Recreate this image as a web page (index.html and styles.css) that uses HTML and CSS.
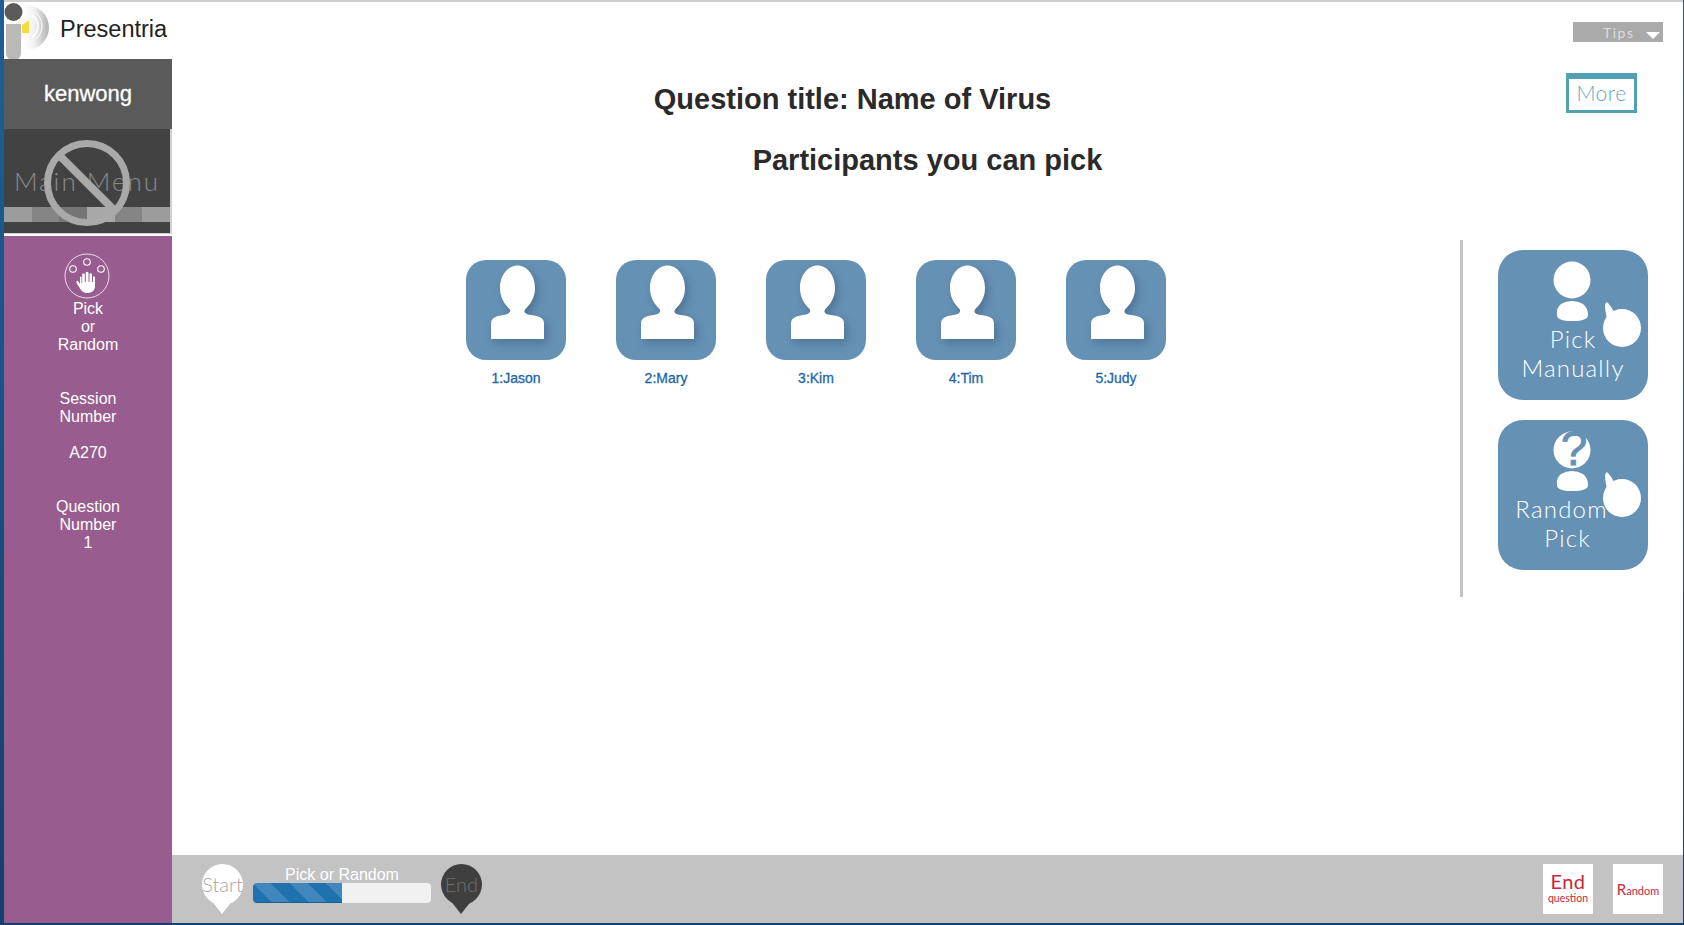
FILE: index.html
```html
<!DOCTYPE html>
<html lang="en">
<head>
    <meta charset="UTF-8">
    <meta name="viewport" content="width=device-width, initial-scale=1.0">
    <title>Presentria</title>
    <link rel="stylesheet" href="styles.css">
</head>
<body>

    <div class="window">
        <aside class="sidebar">
            <div class="brand">
                <svg class="logo" viewBox="0 0 46 58">
                    <defs>
                        <linearGradient id="logoFade" x1="0" x2="1" y1="0" y2="0">
                            <stop offset="0" stop-color="#ffffff"/>
                            <stop offset="0.450" stop-color="#f2f2f2"/>
                            <stop offset="1" stop-color="#b0b0b0"/>
                        </linearGradient>
                    </defs>
                    <path d="M18 3 H22 A23 22.500 0 0 1 22 48 H18 Z" fill="url(#logoFade)"/>
                    <path d="M28 13 A13 13 0 0 1 28 35" fill="none" stroke="#fff" stroke-width="1.500"/>
                    <path d="M32 11 A17 17 0 0 1 32 37" fill="none" stroke="#fff" stroke-width="1"/>
                    <path d="M18 23 L25 18 V31 H18 Z" fill="#f7dc3b"/>
                    <path d="M2 22 H17 V51 A7.500 7.500 0 0 1 2 51 Z" fill="#b9b9b9"/>
                    <circle cx="9.500" cy="10" r="9" fill="#5a5a5a"/>
                </svg>
                <span class="brand-name">Presentria</span>
            </div>
            <div class="user">kenwong</div>
            <div class="main-menu">
                <span class="main-menu-text">Main Menu</span>
                <div class="menu-stripes">
                    <span class="s1"></span><span class="s2"></span><span class="s3"></span>
                    <span class="s4"></span><span class="s5"></span><span class="s6"></span>
                </div>
                <svg class="ban" viewBox="0 0 90 90">
                    <circle cx="45" cy="45" r="39.500" fill="none" stroke="#a9a9a9" stroke-width="7"/>
                    <path d="M17 17 L73 73" stroke="#a9a9a9" stroke-width="8"/>
                </svg>
            </div>
            <div class="side-panel">
                <svg class="pick-icon" viewBox="0 0 46 46">
                    <circle cx="23" cy="23" r="22" fill="none" stroke="#fff" stroke-width="0.800"/>
                    <circle cx="23" cy="9" r="3.300" fill="none" stroke="#fff" stroke-width="1.100"/>
                    <circle cx="9" cy="16" r="3.300" fill="none" stroke="#fff" stroke-width="1.100"/>
                    <circle cx="37" cy="16" r="3.300" fill="none" stroke="#fff" stroke-width="1.100"/>
                    <path d="M16 24 V31 L14 28 Q12 27 12.500 30 L17 37 Q19 40 23 40 Q30 40 31 34 V24 Q29.800 22.500 29 24 V29 H28 V21 Q26.800 19.500 25.500 21 V29 H24.500 V19.500 Q23 18 21.800 19.500 V29 H20.800 V21 Q19.500 19.500 18.200 21 V30 H17.500 V24 Q16.800 22.800 16 24 Z" fill="#fff"/>
                </svg>
                <p class="side-text side-pick">Pick<br>or<br>Random</p>
                <p class="side-text side-session">Session<br>Number</p>
                <p class="side-text side-code">A270</p>
                <p class="side-text side-question">Question<br>Number<br>1</p>
            </div>
        </aside>

        <main class="content">
            <div class="tips-row">
                <div class="tips">Tips <span class="tips-arrow"></span></div>
            </div>

            <div class="title-row">
                <h1>Question title: Name of Virus</h1>
                <div class="more">More</div>
            </div>
            <h2>Participants you can pick</h2>

            <div class="stage">
                <div class="participants">
                    <div class="participant">
                        <div class="avatar"><svg viewBox="0 0 100 100"><path class="person" d="M25 79 V63 Q25 58 32 56 L40 54.500 Q45 53 44 49.500 C38 44 34 37 34 28 C34 15 42 5.500 51.500 5.500 C61 5.500 69 15 69 28 C69 37 65 44 59 49.500 Q57 53 62 54.500 L71 56 Q78 58 78 63 V79 Z"/></svg></div>
                        <div class="participant-name">1:Jason</div>
                    </div>
                    <div class="participant">
                        <div class="avatar"><svg viewBox="0 0 100 100"><path class="person" d="M25 79 V63 Q25 58 32 56 L40 54.500 Q45 53 44 49.500 C38 44 34 37 34 28 C34 15 42 5.500 51.500 5.500 C61 5.500 69 15 69 28 C69 37 65 44 59 49.500 Q57 53 62 54.500 L71 56 Q78 58 78 63 V79 Z"/></svg></div>
                        <div class="participant-name">2:Mary</div>
                    </div>
                    <div class="participant">
                        <div class="avatar"><svg viewBox="0 0 100 100"><path class="person" d="M25 79 V63 Q25 58 32 56 L40 54.500 Q45 53 44 49.500 C38 44 34 37 34 28 C34 15 42 5.500 51.500 5.500 C61 5.500 69 15 69 28 C69 37 65 44 59 49.500 Q57 53 62 54.500 L71 56 Q78 58 78 63 V79 Z"/></svg></div>
                        <div class="participant-name">3:Kim</div>
                    </div>
                    <div class="participant">
                        <div class="avatar"><svg viewBox="0 0 100 100"><path class="person" d="M25 79 V63 Q25 58 32 56 L40 54.500 Q45 53 44 49.500 C38 44 34 37 34 28 C34 15 42 5.500 51.500 5.500 C61 5.500 69 15 69 28 C69 37 65 44 59 49.500 Q57 53 62 54.500 L71 56 Q78 58 78 63 V79 Z"/></svg></div>
                        <div class="participant-name">4:Tim</div>
                    </div>
                    <div class="participant">
                        <div class="avatar"><svg viewBox="0 0 100 100"><path class="person" d="M25 79 V63 Q25 58 32 56 L40 54.500 Q45 53 44 49.500 C38 44 34 37 34 28 C34 15 42 5.500 51.500 5.500 C61 5.500 69 15 69 28 C69 37 65 44 59 49.500 Q57 53 62 54.500 L71 56 Q78 58 78 63 V79 Z"/></svg></div>
                        <div class="participant-name">5:Judy</div>
                    </div>
                </div>

                <div class="actions">
                    <div class="action action-manual">
                        <svg class="action-art" viewBox="0 0 150 150">
                            <circle cx="74" cy="30" r="18.500" fill="#fff"/>
                            <path d="M59 65 Q58 58 63 54 Q68 51 74 51 Q80 51 85 54 Q90 58 90 65 Q90 71 74 71 Q59 71 59 65 Z" fill="#fff"/>
                            <circle cx="124" cy="78" r="19" fill="#fff"/>
                            <path d="M107 55 Q108 51 110 53 Q113 56 116 62 L110 72 Q107 62 107 55 Z" fill="#fff"/>
                        </svg>
                        <span class="action-label">Pick<br>Manually</span>
                    </div>
                    <div class="action action-random">
                        <svg class="action-art" viewBox="0 0 150 150">
                            <circle cx="74" cy="30" r="18.500" fill="#fff"/>
                            <path d="M59 65 Q58 58 63 54 Q68 51 74 51 Q80 51 85 54 Q90 58 90 65 Q90 71 74 71 Q59 71 59 65 Z" fill="#fff"/>
                            <circle cx="124" cy="78" r="19" fill="#fff"/>
                            <path d="M107 55 Q108 51 110 53 Q113 56 116 62 L110 72 Q107 62 107 55 Z" fill="#fff"/>
                        </svg>
                        <span class="action-question">?</span>
                        <span class="action-label"><span class="label-line">Random</span><span class="label-line label-shift">Pick</span></span>
                    </div>
                </div>
            </div>

            <footer class="bottom-bar">
                <div class="pin pin-start">Start</div>
                <div class="progress">
                    <div class="progress-label">Pick or Random</div>
                    <div class="progress-track"><div class="progress-fill"></div></div>
                </div>
                <div class="pin pin-end">End</div>
                <div class="bottom-buttons">
                    <div class="red-button">
                        <span class="red-end">End</span>
                        <span class="red-small">question</span>
                    </div>
                    <div class="red-button"><span class="red-random"><span class="red-cap">R</span>andom</span></div>
                </div>
            </footer>
        </main>
    </div>

</body>
</html>
```

FILE: styles.css
```css
* {
    box-sizing: border-box;
}
body {
    margin: 0;
    height: 925px;
    overflow: hidden;
    padding: 0 1px 2px 4px;
    background: linear-gradient(#1f5f94, #12406f);
    font-family: 'Liberation Sans', Arial, sans-serif;
    color: #2a2a2a;
}
.window {
    display: flex;
    height: 923px;
    background-color: #fff;
    border-top: 2px solid #cfcfcf;
}

/* left column */
.sidebar {
    width: 168px;
    flex-shrink: 0;
    display: flex;
    flex-direction: column;
}
.brand {
    height: 57px;
    display: flex;
    align-items: flex-start;
}
.logo {
    width: 46px;
    height: 58px;
    flex-shrink: 0;
}
.brand-name {
    margin: 13px 0 0 10px;
    font-size: 23.500px;
    line-height: 28px;
    color: #222;
}
.user {
    height: 70px;
    background-color: #5a5a5a;
    color: #fff;
    font-size: 22px;
    line-height: 70px;
    text-align: center;
    -webkit-text-stroke: 0.3px #fff;
}
.main-menu {
    position: relative;
    height: 105px;
    background-color: #424242;
    border-right: 2px solid #d0d0d0;
    border-bottom: 1px solid #d0d0d0;
}
.main-menu-text {
    display: block;
    padding-top: 36px;
    text-align: center;
    font-family: Lato, sans-serif;
    font-weight: 300;
    font-size: 26px;
    line-height: 32px;
    letter-spacing: 2px;
    color: #8a8a8a;
    white-space: nowrap;
}
.menu-stripes {
    display: flex;
    height: 15px;
    margin-top: 10px;
}
.menu-stripes span {
    flex: 1;
}
.s1 { background-color: #9c9c9c; }
.s2 { background-color: #858585; }
.s3 { background-color: #757575; }
.s4 { background-color: #a8a8a8; }
.s5 { background-color: #858585; }
.s6 { background-color: #9c9c9c; }
.ban {
    position: absolute;
    left: 38px;
    top: 9px;
    width: 90px;
    height: 90px;
}
.side-panel {
    flex: 1;
    margin-top: 2px;
    background-color: #985c8e;
    display: flex;
    flex-direction: column;
    align-items: center;
    padding-top: 17px;
}
.pick-icon {
    width: 46px;
    height: 46px;
    flex-shrink: 0;
    margin-right: 2px;
}
.side-text {
    margin: 0;
    color: #fff;
    font-size: 16px;
    line-height: 18px;
    text-align: center;
}
.side-pick { margin-top: 1px; }
.side-session { margin-top: 36px; }
.side-code { margin-top: 18px; }
.side-question { margin-top: 36px; }

/* main area */
.content {
    flex: 1;
    min-width: 0;
    display: flex;
    flex-direction: column;
    padding-top: 20px;
}
.tips-row {
    display: flex;
    justify-content: flex-end;
    padding-right: 20px;
}
.tips {
    width: 90px;
    height: 20px;
    background-color: #aaa;
    color: #dedede;
    font-family: Lato, sans-serif;
    font-size: 14px;
    line-height: 19px;
    letter-spacing: 1.5px;
    padding-left: 30px;
    display: flex;
    align-items: center;
}
.tips-arrow {
    width: 0;
    height: 0;
    margin: 6px 0 0 11px;
    border-left: 7px solid transparent;
    border-right: 7px solid transparent;
    border-top: 7px solid #fff;
}
.title-row {
    display: flex;
    align-items: flex-start;
    margin-top: 31px;
    padding-right: 46px;
}
h1 {
    flex: 1;
    margin: 9px 33px 0 0;
    text-align: center;
    font-size: 29px;
    line-height: 34px;
}
.more {
    width: 71px;
    height: 40px;
    border: 3px solid #52a0b2;
    border-top-width: 6px;
    color: #62a9ba;
    font-family: Lato, sans-serif;
    font-weight: 300;
    font-size: 21px;
    line-height: 28px;
    letter-spacing: 0.5px;
    text-align: center;
}
h2 {
    margin: 27px 0 0;
    text-align: center;
    font-size: 29px;
    line-height: 34px;
}
.stage {
    display: flex;
    justify-content: space-between;
    margin-top: 63px;
    padding: 0 35px 0 294px;
}
.participants {
    display: flex;
    gap: 50px;
    padding-top: 20px;
}
.participant {
    width: 100px;
}
.avatar {
    width: 100px;
    height: 100px;
    border-radius: 20px;
    background-color: #6591b4;
}
.avatar svg {
    display: block;
}
.person {
    fill: #fff;
    filter: drop-shadow(3px 4px 4px rgba(50, 80, 110, 0.45));
}
.participant-name {
    margin-top: 10px;
    text-align: center;
    font-size: 14px;
    line-height: 17px;
    color: #2067a8;
    -webkit-text-stroke: 0.3px #2067a8;
}
.actions {
    width: 188px;
    height: 357px;
    border-left: 3px solid #c3c3c3;
    padding: 10px 0 0 35px;
    display: flex;
    flex-direction: column;
    gap: 20px;
}
.action {
    position: relative;
    width: 150px;
    height: 150px;
    border-radius: 25px;
    background-color: #6591b4;
    color: #fff;
    text-align: center;
}
.action-art {
    position: absolute;
    left: 0;
    top: 0;
    width: 150px;
    height: 150px;
}
.action-label {
    position: relative;
    display: block;
    padding-top: 74px;
    font-family: Lato, sans-serif;
    font-weight: 300;
    font-size: 24px;
    line-height: 29px;
    letter-spacing: 1.2px;
}
.action-random .action-label {
    padding-right: 23px;
}
.label-line {
    display: block;
}
.label-shift {
    padding-left: 12px;
}
.action-question {
    position: absolute;
    left: 56px;
    top: 1px;
    width: 40px;
    font-size: 48px;
    line-height: 56px;
    color: #6591b4;
    -webkit-text-stroke: 0.8px #6591b4;
}

/* bottom bar */
.bottom-bar {
    margin-top: auto;
    height: 68px;
    flex-shrink: 0;
    background-color: #c3c3c3;
    display: flex;
    align-items: flex-start;
    padding: 9px 20px 0 30px;
}
.pin {
    position: relative;
    width: 41px;
    height: 41px;
    flex-shrink: 0;
    border-radius: 50%;
    font-family: Lato, sans-serif;
    font-weight: 300;
    font-size: 20px;
    line-height: 41px;
    text-align: center;
}
.pin::after {
    content: '';
    position: absolute;
    left: 9px;
    top: 36px;
    border-left: 11px solid transparent;
    border-right: 11px solid transparent;
}
.pin-start {
    background-color: #fff;
    color: #a5a5a5;
}
.pin-start::after {
    border-top: 14px solid #fff;
}
.pin-end {
    background-color: #3f3f3f;
    color: #6f6f6f;
}
.pin-end::after {
    border-top: 14px solid #3f3f3f;
}
.progress {
    width: 178px;
    margin: 2px 10px 0;
    flex-shrink: 0;
}
.progress-label {
    height: 17px;
    color: #fff;
    font-size: 16px;
    line-height: 18px;
    text-align: center;
}
.progress-track {
    height: 20px;
    background-color: #f1f1f1;
    border-radius: 4px;
    overflow: hidden;
}
.progress-fill {
    width: 50%;
    height: 100%;
    background: repeating-linear-gradient(45deg, #1f72ae 0, #1f72ae 13px, #3f87bc 13px, #3f87bc 26px);
    border-bottom: 1px solid #1a5f92;
}
.bottom-buttons {
    margin-left: auto;
    display: flex;
    gap: 20px;
}
.red-button {
    width: 50px;
    height: 50px;
    background-color: #fff;
    color: #c8283a;
    display: flex;
    flex-direction: column;
    align-items: center;
    justify-content: center;
    font-family: Lato, sans-serif;
}
.red-end {
    font-size: 20px;
    line-height: 20px;
    letter-spacing: 0.5px;
    margin-top: -2px;
}
.red-small {
    font-size: 10.500px;
    line-height: 14px;
}
.red-random {
    font-size: 11px;
}
.red-cap {
    font-size: 15px;
}
```
